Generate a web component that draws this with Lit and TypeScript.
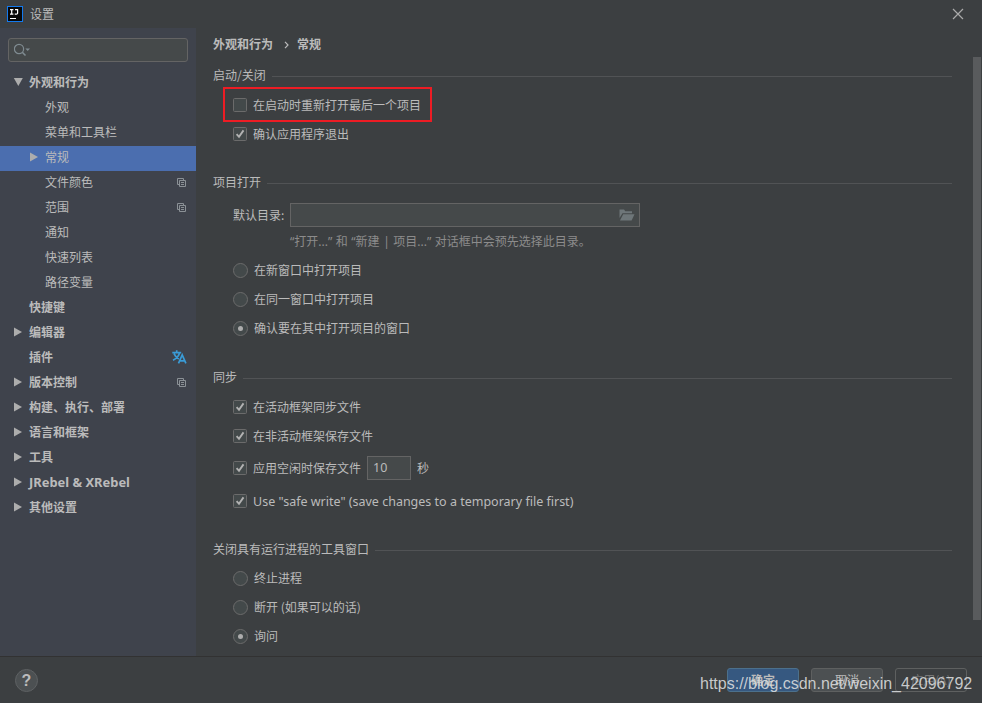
import { LitElement, html, css, nothing } from "lit";
import { customElement } from "lit/decorators.js";
import { classMap } from "lit/directives/class-map.js";

interface TreeItem {
  label: string;
  level: 0 | 1;
  arrow?: "open" | "closed";
  selected?: boolean;
  badge?: "copy" | "lang";
  latin?: boolean;
}

const TREE: TreeItem[] = [
  { label: "外观和行为", level: 0, arrow: "open" },
  { label: "外观", level: 1 },
  { label: "菜单和工具栏", level: 1 },
  { label: "常规", level: 1, arrow: "closed", selected: true },
  { label: "文件颜色", level: 1, badge: "copy" },
  { label: "范围", level: 1, badge: "copy" },
  { label: "通知", level: 1 },
  { label: "快速列表", level: 1 },
  { label: "路径变量", level: 1 },
  { label: "快捷键", level: 0 },
  { label: "编辑器", level: 0, arrow: "closed" },
  { label: "插件", level: 0, badge: "lang" },
  { label: "版本控制", level: 0, arrow: "closed", badge: "copy" },
  { label: "构建、执行、部署", level: 0, arrow: "closed" },
  { label: "语言和框架", level: 0, arrow: "closed" },
  { label: "工具", level: 0, arrow: "closed" },
  { label: "JRebel & XRebel", level: 0, arrow: "closed", latin: true },
  { label: "其他设置", level: 0, arrow: "closed" },
];

const arrowIcon = (open: boolean) => html`<svg class="arrow" width="10" height="10" viewBox="0 0 10 10">
  <path d=${open ? "M0.8 1H9.8L5.3 9Z" : "M1 0.5V9.5L9 5Z"} fill="#adadad" />
</svg>`;

const copyIcon = html`<svg width="9" height="9" viewBox="0 0 9 9" fill="none" stroke="#8b9196">
  <path d="M2 6.5H0.5V0.5H6.5V2M2.5 2.5H8.5V8.5H2.5ZM4 4.5H7M4 6.5H7" />
</svg>`;

const langIcon = html`<svg class="lang" width="15" height="14" viewBox="0 0 15 14" fill="none" stroke="#3a9bd6" stroke-width="1.7">
  <path d="M0.3 2.6H9.2M4.7 0.3V2.6M7.6 3C6.6 6 4 8.8 1 10.2M2 3.6C3 6 4.8 8 6.8 9" />
  <path d="M6.5 13.4L10.2 4.9L13.9 13.4M7.8 10.8H12.7" />
</svg>`;

@customElement("app-root")
export class AppRoot extends LitElement {
  static styles = css`
    :host {
      position: relative;
      display: flex;
      flex-direction: column;
      width: 982px;
      height: 703px;
      overflow: hidden;
      background: #3c3f41;
      color: #bbbbbb;
      font: 12px/16px "Noto Sans CJK SC", "Noto Sans", sans-serif;
    }
    * { box-sizing: border-box; }
    svg { display: block; flex: none; }
    .title { height: 28px; display: flex; align-items: center; padding: 0 18px 0 7px; flex: none; }
    .title span { flex: 1; margin-left: 7px; }
    .body { flex: none; height: 628px; display: flex; }
    .side { width: 196px; background: #3f434c; padding-top: 10px; }
    .search {
      margin: 0 8px 9px; height: 24px; border: 1px solid #646464; border-radius: 3px;
      background: #45494a; display: flex; align-items: center; padding-left: 5px;
    }
    .item { height: 25px; display: flex; align-items: center; padding: 0 10px 3px 13px; white-space: nowrap; }
    .item.sub { padding-left: 29px; }
    .item.sel { background: #4b6eaf; }
    .slot { width: 16px; flex: none; }
    .item .name { flex: 1; }
    .top .name { font-weight: 700; }
    .item .name.latin { font-family: "Noto Sans", sans-serif; font-size: 12.9px; }
    .safe { font-family: "Noto Sans", sans-serif; font-size: 12.5px; margin-top: 1px; }
    .badge { width: 9px; display: flex; justify-content: center; margin-top: 1px; }
    .lang { margin: -2px 0 0 -4px; }
    .main { flex: 1; padding: 0 30px 0 17px; }
    .crumbs { height: 34px; display: flex; align-items: center; padding-bottom: 2px; font-weight: 700; }
    .crumbs svg { margin: 2px 8px 0 11px; }
    .head { height: 29px; display: flex; align-items: center; padding-bottom: 3px; }
    .head::after { content: ""; flex: 1; height: 1px; background: #515355; margin: 3px 0 0 6px; }
    .gap20 { margin-top: 20px; }
    .gap21 { margin-top: 21px; }
    .row { position: relative; height: 29px; display: flex; align-items: center; padding: 0 0 1px 20px; white-space: nowrap; }
    .check, .radio { margin-right: 6px; }
    .radio { margin-top: 1px; }
    .mark { position: absolute; left: 10px; top: -4px; width: 209px; height: 35px; border: 2px solid #ed1c24; }
    .row.dir { height: 34px; padding-bottom: 0; }
    .field { width: 350px; height: 24px; border: 1px solid #646464; background: #45494a; margin-left: 6px;
      display: flex; align-items: center; justify-content: flex-end; padding-right: 4px; }
    .hint { height: 24px; padding: 2px 0 0 77px; color: #8c8c8c; font-family: "Noto Sans", "Noto Sans CJK SC", sans-serif;
      word-spacing: 0.4px; white-space: nowrap; }
    .row.idle { height: 34px; padding-bottom: 0; }
    .num { width: 44px; height: 24px; border: 1px solid #646464; background: #45494a; margin: 0 6px; padding: 3px 5px;
      font-family: "Noto Sans", sans-serif; font-size: 12.5px; }
    .saferow { margin-top: 2px; }
    .close { margin-top: 20px; }
    .close + .row { margin-top: -1px; }
    .foot { flex: 1; border-top: 1px solid #323232; display: flex; align-items: center; padding: 0 15px 0 15px; }
    .help { width: 23px; height: 23px; border: 1px solid #5e6163; border-radius: 50%; background: #4c5052;
      font: 700 16px/21px "Liberation Sans", Arial, sans-serif; text-align: center; margin-right: auto; margin-top: 1px; }
    .btn { width: 72px; height: 24px; border: 1px solid #5e6060; border-radius: 3px; background: #4c5052;
      line-height: 22px; text-align: center; margin-left: 12px; }
    .btn.ok { background: #365880; border-color: #4c708c; font-weight: 700; }
    .btn.off { background: none; color: #777777; }
    .scroll { position: absolute; left: 973px; top: 57px; width: 8px; height: 563px; background: #595b5d; }
    .stamp { position: absolute; left: 700px; top: 675px; font: 16px/18px "Liberation Sans", Arial, sans-serif;
      color: rgba(220, 222, 223, 0.88); white-space: nowrap; }
  `;

  private check(on: boolean) {
    return html`<svg class="check" width="14" height="14" viewBox="0 0 14 14">
      <rect x="0.5" y="0.5" width="13" height="13" rx="1" fill="#43494a" stroke="#6b6b6b" />
      ${on ? html`<svg width="14" height="14" viewBox="0 0 14 14"><path d="M3.6 7.2L6 9.8L10.5 3.4" fill="none" stroke="#b2b2b2" stroke-width="1.9" /></svg>` : nothing}
    </svg>`;
  }

  private radio(label: string, on = false) {
    return html`<div class="row"><svg class="radio" width="15" height="15" viewBox="0 0 15 15">
      <circle cx="7.5" cy="7.5" r="7" fill="#43494a" stroke="#6b6b6b" />
      <circle cx="7.5" cy="7.5" r=${on ? 2.5 : 0} fill="#adadad" />
    </svg>${label}</div>`;
  }

  private item(t: TreeItem) {
    return html`<div class=${classMap({ item: true, sub: t.level === 1, top: t.level === 0, sel: !!t.selected })}>
      <div class="slot">${t.arrow ? arrowIcon(t.arrow === "open") : nothing}</div>
      <span class=${classMap({ name: true, latin: !!t.latin })}>${t.label}</span>
      ${t.badge ? html`<div class="badge">${t.badge === "copy" ? copyIcon : langIcon}</div>` : nothing}
    </div>`;
  }

  render() {
    return html`
      <div class="title">
        <svg width="16" height="16" viewBox="0 0 16 16">
          <rect x="0.5" y="0.5" width="15" height="15" fill="#080808" stroke="#1379ed" />
          <path d="M3 3.6H6.4M4.7 3.6V8M3 8.1H6.4M8 3.6H10.6V7Q10.6 8.2 9.2 8.1H7.7M3 12.5H9" fill="none" stroke="#ffffff" stroke-width="1.2" />
        </svg>
        <span>设置</span>
        <svg width="12" height="12" viewBox="0 0 12 12"><path d="M1 1L11 11M11 1L1 11" stroke="#aaaaaa" stroke-width="1.2" /></svg>
      </div>
      <div class="body">
        <div class="side">
          <div class="search">
            <svg width="17" height="14" viewBox="0 0 17 14">
              <circle cx="5" cy="6" r="4.6" fill="none" stroke="#7f8b91" stroke-width="1.2" />
              <path d="M8.3 9.3L11.5 12.5" stroke="#7f8b91" stroke-width="1.6" />
              <path d="M11.4 5.5H16L13.7 8Z" fill="#7f8b91" />
            </svg>
          </div>
          ${TREE.map((t) => this.item(t))}
        </div>
        <div class="main">
          <div class="crumbs">外观和行为<svg width="5" height="8" viewBox="0 0 5 8"><path d="M1 0.8L4 4L1 7.2" fill="none" stroke="#bbbbbb" stroke-width="1.2" /></svg>常规</div>
          <div class="head">启动/关闭</div>
          <div class="row">${this.check(false)}在启动时重新打开最后一个项目<div class="mark"></div></div>
          <div class="row">${this.check(true)}确认应用程序退出</div>
          <div class="head gap20">项目打开</div>
          <div class="row dir">默认目录:<div class="field">
            <svg width="16" height="12" viewBox="0 0 16 12" fill="#6e7679"><path d="M0.5 9V0.5H5L6.3 2.3H13V4.2H3.5Z" /><path d="M4.2 5.2H15.5L12.6 11.5H1Z" /></svg>
          </div></div>
          <div class="hint">“打开...” 和 “新建 | 项目...” 对话框中会预先选择此目录。</div>
          ${this.radio("在新窗口中打开项目")}
          ${this.radio("在同一窗口中打开项目")}
          ${this.radio("确认要在其中打开项目的窗口", true)}
          <div class="head gap21">同步</div>
          <div class="row">${this.check(true)}在活动框架同步文件</div>
          <div class="row">${this.check(true)}在非活动框架保存文件</div>
          <div class="row idle">${this.check(true)}应用空闲时保存文件<div class="num">10</div>秒</div>
          <div class="row saferow">${this.check(true)}<span class="safe">Use "safe write" (save changes to a temporary file first)</span></div>
          <div class="head close">关闭具有运行进程的工具窗口</div>
          ${this.radio("终止进程")}
          ${this.radio("断开 (如果可以的话)")}
          ${this.radio("询问", true)}
        </div>
      </div>
      <div class="foot">
        <div class="help">?</div>
        <div class="btn ok">确定</div>
        <div class="btn">取消</div>
        <div class="btn off">应用(A)</div>
      </div>
      <div class="scroll"></div>
      <div class="stamp">https://blog.csdn.net/weixin_42096792</div>
    `;
  }
}
